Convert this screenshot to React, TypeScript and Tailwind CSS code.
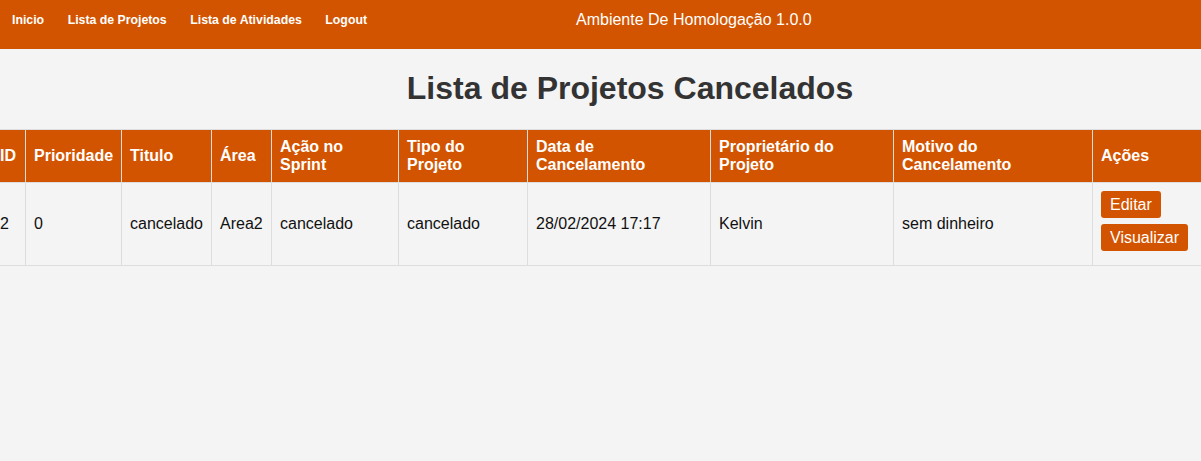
import React from "react";

const cols = [
  { h: ["ID"], w: 34, v: "2" },
  { h: ["Prioridade"], w: 96, v: "0" },
  { h: ["Titulo"], w: 90, v: "cancelado" },
  { h: ["Área"], w: 60, v: "Area2" },
  { h: ["Ação no", "Sprint"], w: 127, v: "cancelado" },
  { h: ["Tipo do", "Projeto"], w: 129, v: "cancelado" },
  { h: ["Data de", "Cancelamento"], w: 183, v: "28/02/2024 17:17" },
  { h: ["Proprietário do", "Projeto"], w: 183, v: "Kelvin" },
  { h: ["Motivo do", "Cancelamento"], w: 199, v: "sem dinheiro" },
  { h: ["Ações"], w: 118, v: null },
];

export default function App() {
  return (
    <div
      className="min-h-[461px] w-[1201px] overflow-hidden bg-[#f4f4f4]"
      style={{ fontFamily: '"Liberation Sans", Arial, sans-serif' }}
    >
      <header className="flex h-[49px] items-start bg-[#d35400] pt-[11px] text-white">
        <nav className="flex gap-[23.5px] pl-[12px] text-[12.3px] font-bold leading-[18px]">
          <a>Inicio</a>
          <a>Lista de Projetos</a>
          <a>Lista de Atividades</a>
          <a>Logout</a>
        </nav>
        <div className="ml-[209px] text-[16px] leading-[18px]">Ambiente De Homologação 1.0.0</div>
      </header>
      <h1 className="w-[1260px] pt-[21px] pb-[22px] text-center text-[32px] font-bold leading-[37px] text-[#333]">
        Lista de Projetos Cancelados
      </h1>
      <table className="ml-[-9px] table-fixed border-collapse text-[16px] leading-[18px]" style={{ width: 1219 }}>
        <colgroup>
          {cols.map((c, i) => (
            <col key={i} style={{ width: c.w }} />
          ))}
        </colgroup>
        <thead>
          <tr>
            {cols.map((c, i) => (
              <th
                key={i}
                className="h-[52px] border border-[#dddddd] bg-[#d35400] px-[8px] py-[8px] text-left align-middle font-bold text-white"
              >
                {c.h.map((l, j) => (
                  <div key={j}>{l}</div>
                ))}
              </th>
            ))}
          </tr>
        </thead>
        <tbody>
          <tr>
            {cols.map((c, i) => (
              <td
                key={i}
                className="h-[83px] border border-[#dddddd] px-[8px] py-[8px] align-middle text-[#111]"
              >
                {c.v !== null ? (
                  c.v
                ) : (
                  <div className="flex flex-col items-start gap-[6px] pb-[6px]">
                    <button className="h-[27px] rounded-[3px] bg-[#d35400] px-[9px] leading-[19px] text-white">
                      Editar
                    </button>
                    <button className="h-[27px] rounded-[3px] bg-[#d35400] px-[9px] leading-[19px] text-white">
                      Visualizar
                    </button>
                  </div>
                )}
              </td>
            ))}
          </tr>
        </tbody>
      </table>
    </div>
  );
}
